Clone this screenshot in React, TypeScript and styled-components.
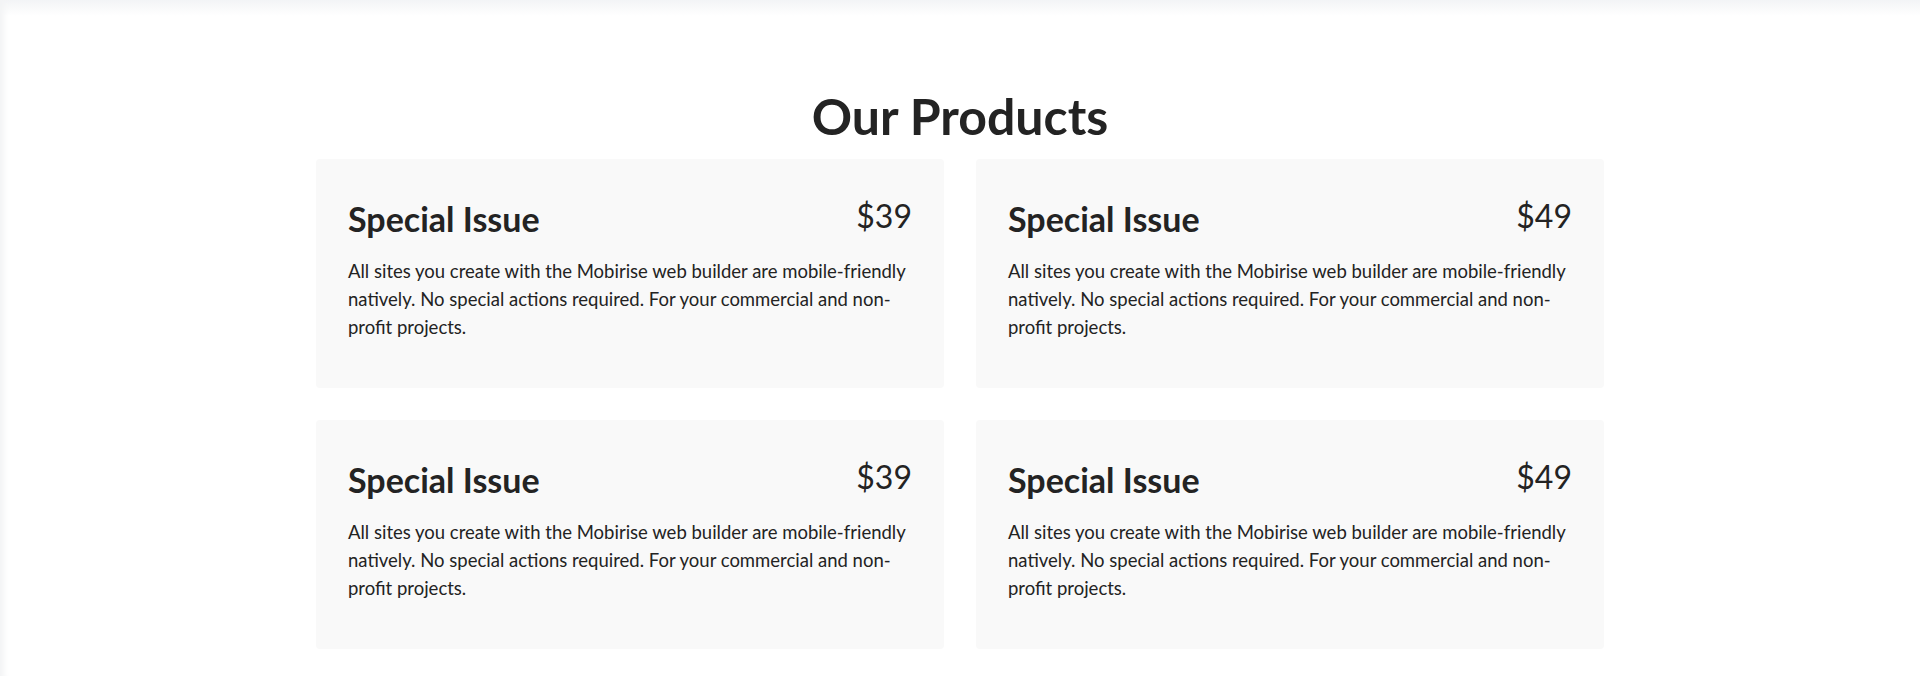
import styled, { createGlobalStyle } from "styled-components";

const GlobalStyle = createGlobalStyle`
  html, body {
    margin: 0;
    padding: 0;
    background: #ffffff;
  }
  body {
    font-family: Lato, "Liberation Sans", sans-serif;
    color: #232323;
  }
`;

const Page = styled.div`
  min-height: 676px;
  background: linear-gradient(to bottom, #f3f4f6 0px, #ffffff 16px);
  box-shadow: inset 8px 0 6px -4px #f3f4f5;
`;

const Section = styled.section`
  padding: 86px 0 28px;
`;

const Container = styled.div`
  max-width: 1320px;
  margin: 0 auto;
`;

const Heading = styled.h2`
  margin: 0 0 13px;
  font-size: 50px;
  line-height: 1.2;
  font-weight: 700;
  text-align: center;
  color: #232323;
`;

const Grid = styled.div`
  display: grid;
  grid-template-columns: 1fr 1fr;
  row-gap: 32px;
`;

const Col = styled.div`
  padding: 0 16px;
`;

const Card = styled.div`
  background: #f9f9f9;
  border-radius: 4px;
  padding: 40px 32px 36px;
  min-height: 229px;
  box-sizing: border-box;
`;

const CardHead = styled.div`
  display: flex;
  justify-content: space-between;
  align-items: flex-start;
  margin-bottom: 17px;
`;

const CardTitle = styled.h4`
  margin: 0;
  font-size: 34px;
  line-height: 1.2;
  font-weight: 700;
`;

const Price = styled.span`
  font-size: 32px;
  line-height: 1.2;
  font-weight: 400;
  margin-top: -2px;
`;

const Text = styled.p`
  margin: 0;
  font-size: 18.5px;
  line-height: 28.2px;
`;

const products = [
  { title: "Special Issue", price: "$39" },
  { title: "Special Issue", price: "$49" },
  { title: "Special Issue", price: "$39" },
  { title: "Special Issue", price: "$49" },
];

const copy =
  "All sites you create with the Mobirise web builder are mobile-friendly natively. No special actions required. For your commercial and non-profit projects.";

export default function App() {
  return (
    <>
      <GlobalStyle />
      <Page>
        <Section>
          <Container>
            <Heading>Our Products</Heading>
            <Grid>
              {products.map((p, i) => (
                <Col key={i}>
                  <Card>
                    <CardHead>
                      <CardTitle>{p.title}</CardTitle>
                      <Price>{p.price}</Price>
                    </CardHead>
                    <Text>{copy}</Text>
                  </Card>
                </Col>
              ))}
            </Grid>
          </Container>
        </Section>
      </Page>
    </>
  );
}
